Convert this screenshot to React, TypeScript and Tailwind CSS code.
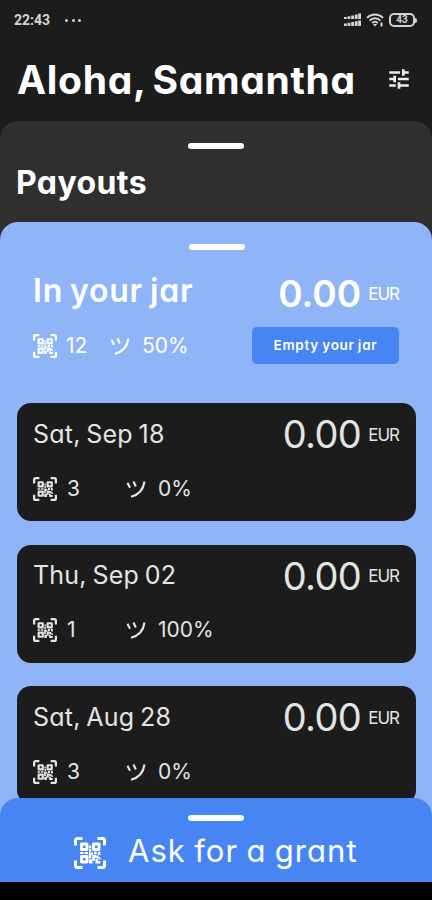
interface Payout {
  date: string;
  scans: number;
  smiles: string;
  amount: string;
}

const payouts: Payout[] = [
  { date: 'Sat, Sep 18', scans: 3, smiles: '0%', amount: '0.00' },
  { date: 'Thu, Sep 02', scans: 1, smiles: '100%', amount: '0.00' },
  { date: 'Sat, Aug 28', scans: 3, smiles: '0%', amount: '0.00' },
];

function TuneIcon({ className }: { className?: string }) {
  return (
    <svg viewBox="0 0 24 24" fill="none" stroke="currentColor" strokeWidth="2.5" className={className}>
      <path d="M3 6h10M16 3v6M16 6h5M3 12h5M8 9v6M11 12h10M3 18h6M12 15v6M12 18h9" />
    </svg>
  );
}

function QrIcon({ className }: { className?: string }) {
  return (
    <svg viewBox="0 0 32 32" fill="none" className={className}>
      <path
        d="M1.500 8.500V3.500a2 2 0 0 1 2-2H8.500M23.500 1.500h5a2 2 0 0 1 2 2v5M30.500 23.500v5a2 2 0 0 1-2 2h-5M8.500 30.500h-5a2 2 0 0 1-2-2v-5"
        stroke="currentColor"
        strokeWidth="3"
      />
      <path
        d="M7.500 7h5.500v5.500H7.500zM19.500 7H25v5.500h-5.500zM7.500 19.500h5.500V25H7.500z"
        stroke="currentColor"
        strokeWidth="2.9"
        strokeLinejoin="round"
      />
      <path
        d="M15.200 8.500h2v2.800h-2zM15.200 12h2v3h-2zM6 15h3.500v2H6zM10.500 15h3.500v2h-3.500zM14.800 15.500h4.200v2.800h-1.800v3h-2.400zM20 14.800h2.800v2.400H20zM24 14.800h2.500V18H24zM18.500 18h3.500v2.800h-3.500zM22 18.500h2.500v2.700H22zM15 22.300h3.200V20H21v3.800h-2.500v2.700H15zM21.500 22h2.300v2h2.500v2.500h-4.800zM24.500 20.300h2v2.300h-2z"
        fill="currentColor"
      />
    </svg>
  );
}

function SmileIcon({ className }: { className?: string }) {
  return (
    <svg viewBox="0 0 20 18" fill="none" stroke="currentColor" strokeWidth="2.1" className={className}>
      <path d="M1.500 2.800 4 7.800M7.500 1.500l2.300 5M18.500 1.500C17.500 9 12.500 14.800 5 16.700" />
    </svg>
  );
}

function Handle() {
  return <div className="mx-auto h-1.5 w-14 rounded-full bg-white" />;
}

function StatusBar() {
  return (
    <div className="flex h-10 shrink-0 items-center pr-[15px] pl-[14px] text-[#d4d4d4]">
      <span className="font-[Roboto] text-[14px] font-bold">22:43</span>
      <div className="ml-[15px] flex gap-[3.500px]">
        <i className="size-[3px] rounded-full bg-current" />
        <i className="size-[3px] rounded-full bg-current" />
        <i className="size-[3px] rounded-full bg-current" />
      </div>
      <svg viewBox="0 0 17 14" className="ml-auto h-[14px] w-[17px]" fill="currentColor">
        <path d="M0 4h2.800v2H0zM3.600 3.300h2.800V6H3.600zM7.200 2.500H10V6H7.200zM10.800 1.600h2.800V6h-2.800zM14.200.5H17V6h-2.800zM0 10.500h2.800V13H0zM3.600 9.800h2.800V13H3.600zM7.200 9H10v4H7.200zM10.800 8.200h2.800V13h-2.800zM14.200 7.500H17V13h-2.800z" />
      </svg>
      <svg viewBox="0 0 18 14" className="ml-[5px] h-[14px] w-[18px]" fill="none" stroke="currentColor" strokeWidth="2">
        <path d="M1 4.900C5.500.4 12.500.4 17 4.900M3.600 7.600c3-3 7.800-3 10.800 0M6.200 10.100c1.600-1.500 4-1.500 5.600 0" />
        <path d="M9 13.500 6.800 11h4.400z" fill="currentColor" stroke="none" />
        <path d="M15.500 9.500v4" />
      </svg>
      <div className="ml-[5px] flex items-center">
        <div className="flex h-[14px] w-[26px] items-center justify-center rounded-[5px] border-2 border-current font-[Roboto] text-[10px] leading-none font-bold">
          43
        </div>
        <i className="h-[5px] w-[2px] rounded-r-full bg-current" />
      </div>
    </div>
  );
}

function PayoutCard({ payout }: { payout: Payout }) {
  return (
    <div className="h-[118px] rounded-[14px] bg-[#1c1c1c] pr-[17px] pl-4 text-[#e4e4e4]">
      <div className="flex h-[63px] items-center justify-between">
        <span className="text-[25px] tracking-[0.2px] [word-spacing:-1.5px]">{payout.date}</span>
        <div className="flex items-center">
          <span className="text-[38px] tracking-[-0.6px]">{payout.amount}</span>
          <span className="ml-[7px] pt-0.5 text-[17px] tracking-[-1px]">EUR</span>
        </div>
      </div>
      <div className="flex h-[45px] items-center">
        <QrIcon className="size-6" />
        <span className="ml-[10px] w-[59px] text-[21px]">{payout.scans}</span>
        <SmileIcon className="h-[18px] w-5" />
        <span className="ml-3 text-[21px]">{payout.smiles}</span>
      </div>
    </div>
  );
}

export default function App() {
  return (
    <div className="flex h-[900px] w-[432px] flex-col overflow-hidden bg-black font-[Inter,sans-serif] text-white [font-feature-settings:'cv11']">
      <div className="flex h-[822px] shrink-0 flex-col overflow-hidden bg-[#1c1c1c]">
        <StatusBar />
        <header className="flex h-[81px] shrink-0 items-center justify-between pr-5 pl-[17px]">
          <h1 className="text-[39px] font-bold tracking-[0.7px] whitespace-nowrap [word-spacing:-3px]">
            Aloha, Samantha
          </h1>
          <TuneIcon className="mb-1 size-[26px] text-[#ececec]" />
        </header>

        <section className="h-[101px] shrink-0 rounded-t-[18px] bg-[#2f2f2f] pt-[22px]">
          <Handle />
          <h2 className="mt-3 pl-4 text-[32px] leading-[44px] font-bold tracking-[0.4px]">Payouts</h2>
        </section>

        <div className="shrink-0 bg-[#2f2f2f]">
          <section className="rounded-t-[18px] bg-[#8fb5f8] pr-4 pb-6 pl-[17px] pt-[22px]">
            <Handle />
            <div className="flex justify-between pr-[17px] pl-4 pt-[19px]">
              <div>
                <h2 className="text-[32px] leading-[44px] font-semibold tracking-[0.8px] [word-spacing:-2px]">
                  In your jar
                </h2>
                <div className="mt-[20px] flex h-[26px] items-center">
                  <QrIcon className="size-6" />
                  <span className="ml-[9px] w-[44px] text-[21px]">12</span>
                  <SmileIcon className="h-[18px] w-5" />
                  <span className="ml-3 text-[21px]">50%</span>
                </div>
              </div>
              <div className="flex flex-col items-end">
                <div className="flex h-[50px] items-center">
                  <span className="text-[37px] font-semibold">0.00</span>
                  <span className="ml-[7px] pt-0.5 text-[17px] tracking-[-1px]">EUR</span>
                </div>
                <button className="mt-2 h-[37px] w-[147px] rounded-[5px] bg-[#4785f3] text-[13.5px] font-semibold tracking-[0.75px] [word-spacing:-1px]">
                  Empty your jar
                </button>
              </div>
            </div>
            <div className="mt-[39px] flex flex-col gap-[23.5px]">
              {payouts.map((payout) => (
                <PayoutCard key={payout.date} payout={payout} />
              ))}
            </div>
          </section>
        </div>
      </div>

      {/* bottom sheet overlaps the scrolling list */}
      <div className="relative -mt-6 h-[84px] shrink-0 rounded-t-[18px] bg-[#4785f3] pt-[17px]">
        <Handle />
        <div className="flex h-[60px] items-center pl-[74px]">
          <QrIcon className="mt-1 size-8" />
          <span className="ml-[22px] text-[31px] tracking-[1.05px] [word-spacing:-1.5px]">Ask for a grant</span>
        </div>
      </div>
    </div>
  );
}
